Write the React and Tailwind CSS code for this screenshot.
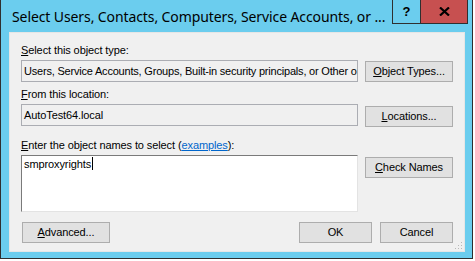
import React from 'react'

const ui = { fontFamily: '"Liberation Sans", Arial, sans-serif', letterSpacing: '-0.1px' }

function Btn({ children, className = '' }) {
  return (
    <button
      type="button"
      className={`h-[21px] bg-[#e1e1e1] border border-[#adadad] text-[11px] leading-[13px] text-black flex items-center justify-center shrink-0 ${className}`}
    >
      {children}
    </button>
  )
}

function Label({ children, className = '' }) {
  return <div className={`text-[11px] leading-[13px] text-black ${className}`}>{children}</div>
}

export default function App() {
  return (
    <div className="w-[475px] h-[261px] bg-white" style={ui}>
      <div className="w-[473px] h-[259px] bg-[#6bcdee] border-x border-b border-[#2f2f2f] flex flex-col">
        {/* title bar */}
        <div className="h-[32px] flex items-start">
          <div
            className="flex-1 min-w-0 overflow-hidden pl-[11px] pt-[7px] text-[14px] leading-[20px] text-black whitespace-nowrap"
            style={{ fontFamily: '"Noto Sans", "Open Sans", sans-serif', letterSpacing: '-0.1px' }}
          >
            Select Users, Contacts, Computers, Service Accounts, or ...
          </div>
          <div className="flex shrink-0 mr-[4px]">
            <div className="w-[29px] h-[24px] border border-t-0 border-[#2f2f2f] flex items-center justify-center text-[13px] font-bold text-black">
              ?
            </div>
            <div className="w-[47px] h-[24px] bg-[#c75050] border border-l-0 border-t-0 border-[#2f2f2f] flex items-center justify-center">
              <svg width="11" height="9" viewBox="0 0 11 9">
                <path d="M1 0.5 L10 8.5 M10 0.5 L1 8.5" stroke="#000" strokeWidth="2.2" />
              </svg>
            </div>
          </div>
        </div>

        {/* client area */}
        <div className="relative flex-1 ml-[8px] mr-[7px] mb-[6px] bg-[#f0f0f0] border border-[#e6e6e6] px-[11px] pt-[11px]">
          <Label className="h-[16px]">
            <span className="underline">S</span>elect this object type:
          </Label>
          <div className="flex gap-[7px] items-start">
            <div
              className="w-[337px] h-[22px] border border-[#abadb3] bg-[#f0f0f0] px-[2px] text-[11px] leading-[20px] whitespace-nowrap overflow-hidden"
              style={{ letterSpacing: '-0.2px' }}
            >
              Users, Service Accounts, Groups, Built-in security principals, or Other objects
            </div>
            <Btn className="w-[88px] mt-[1px]">
              <span><span className="underline">O</span>bject Types...</span>
            </Btn>
          </div>

          <Label className="h-[16px] mt-[6px]">
            <span className="underline">F</span>rom this location:
          </Label>
          <div className="flex gap-[7px] items-start">
            <div className="w-[337px] h-[22px] border border-[#abadb3] bg-[#f0f0f0] px-[2px] text-[11px] leading-[20px] whitespace-nowrap overflow-hidden">
              AutoTest64.local
            </div>
            <Btn className="w-[88px] mt-[2px]">
              <span><span className="underline">L</span>ocations...</span>
            </Btn>
          </div>

          <Label className="h-[16px] mt-[12px]">
            <span className="underline">E</span>nter the object names to select (
            <span className="text-[#0066cc] underline">examples</span>):
          </Label>
          <div className="flex gap-[7px] items-start">
            <div className="w-[337px] h-[57px] border border-[#7a7a7a] border-r-[#e3e3e3] border-b-[#e3e3e3] bg-white px-[2px] pt-[1px] text-[11px] leading-[14px]">
              smproxyrights
              <span className="inline-block w-px h-[13px] bg-black align-[-2px] ml-px" />
            </div>
            <Btn className="w-[88px] mt-[2px]">
              <span><span className="underline">C</span>heck Names</span>
            </Btn>
          </div>

          <div className="flex mt-[10px]">
            <Btn className="w-[88px] ml-[1px]">
              <span><span className="underline">A</span>dvanced...</span>
            </Btn>
            <div className="flex-1" />
            <Btn className="w-[73px] border-[#3c7fb1]">OK</Btn>
            <Btn className="w-[73px] ml-[8px]">Cancel</Btn>
          </div>

          {/* resize grip */}
          <svg className="absolute right-[1px] bottom-[1px]" width="8" height="8" viewBox="0 0 8 8">
            <rect x="6" y="0" width="1" height="1" fill="#b8b8b8" />
            <rect x="3" y="3" width="1" height="1" fill="#b8b8b8" />
            <rect x="6" y="3" width="1" height="1" fill="#b8b8b8" />
            <rect x="0" y="6" width="1" height="1" fill="#b8b8b8" />
            <rect x="3" y="6" width="1" height="1" fill="#b8b8b8" />
            <rect x="6" y="6" width="1" height="1" fill="#b8b8b8" />
          </svg>
        </div>
      </div>
    </div>
  )
}
